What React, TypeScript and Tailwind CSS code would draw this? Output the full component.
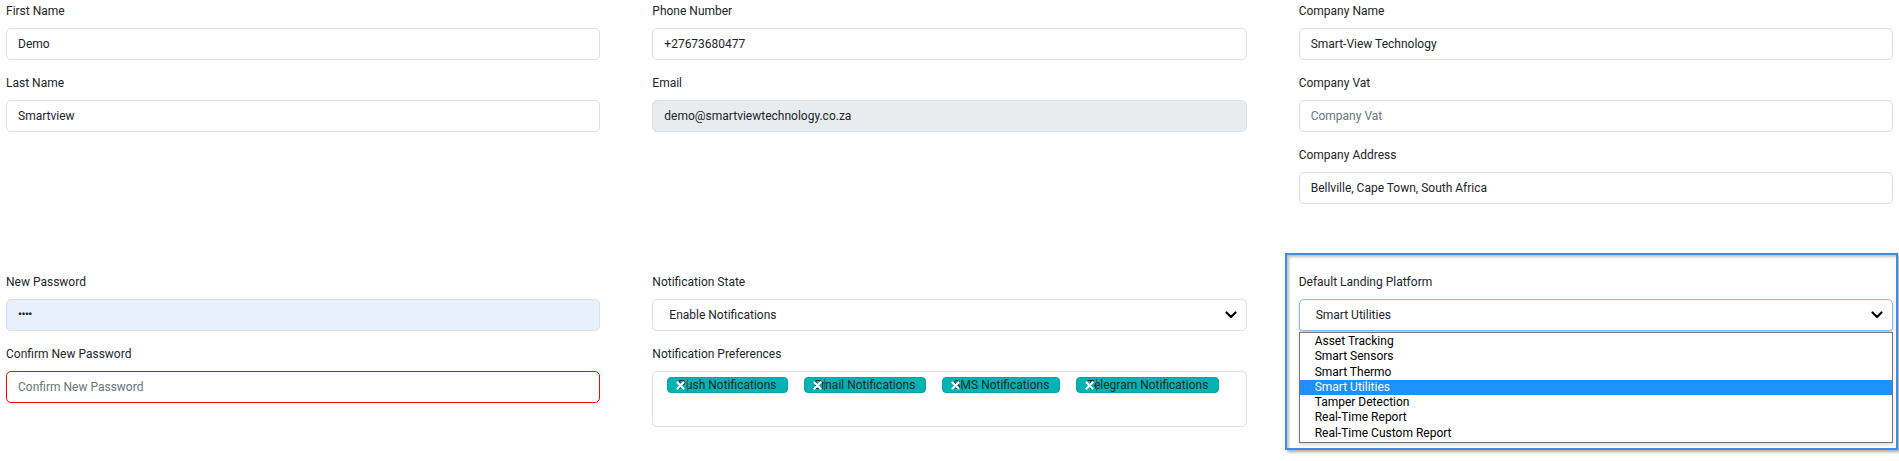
import React from "react";

const font = { fontFamily: "Roboto, 'Liberation Sans', sans-serif" };

function Label({ children }: { children: React.ReactNode }) {
  return <div className="h-[22px] leading-[22px] text-[12px] text-[#212529] mb-[6px]">{children}</div>;
}

function Field({
  label,
  value,
  placeholder,
  variant,
}: {
  label: string;
  value?: string;
  placeholder?: string;
  variant?: "disabled" | "autofill" | "error";
}) {
  const base = "h-[32px] rounded-[5px] border px-[11px] flex items-center text-[12px]";
  let cls = "bg-white border-[#dcdfe3]";
  if (variant === "disabled") cls = "bg-[#e9ecef] border-[#dcdfe3]";
  if (variant === "autofill") cls = "bg-[#e8f0fe] border-[#dcdfe3]";
  if (variant === "error") cls = "bg-white border-[#ff0000]";
  return (
    <div className="mb-[12px]">
      <Label>{label}</Label>
      <div className={`${base} ${cls}`}>
        {value ? (
          <span className="text-[#212529]">{value}</span>
        ) : (
          <span className="text-[#6c757d]">{placeholder}</span>
        )}
      </div>
    </div>
  );
}

function Chevron() {
  return (
    <svg width="12" height="8" viewBox="0 0 12 8" className="shrink-0">
      <path d="M1.5 1.5 L6 6 L10.5 1.5" fill="none" stroke="#000" strokeWidth="2.2" strokeLinecap="round" strokeLinejoin="round" />
    </svg>
  );
}

function Chip({ text }: { text: string }) {
  return (
    <div className="relative h-[16px] rounded-[4px] bg-[#00b2b2] border border-[#0aa3a3] pl-[10px] pr-[10px] flex items-center text-[12px] leading-none text-[#1f2a2a]">
      <span>{text}</span>
      <svg className="absolute left-[8px] top-[3px]" width="9" height="9" viewBox="0 0 9 9">
        <path d="M1.5 1.5 L7.5 7.5 M7.5 1.5 L1.5 7.5" stroke="#fff" strokeWidth="2.2" strokeLinecap="round" />
      </svg>
      <span className="absolute left-[19px] top-[1px] h-[12px] w-px bg-[#4a5a5a]" />
    </div>
  );
}

const options = [
  "Asset Tracking",
  "Smart Sensors",
  "Smart Thermo",
  "Smart Utilities",
  "Tamper Detection",
  "Real-Time Report",
  "Real-Time Custom Report",
];

export default function App() {
  return (
    <div className="w-[1899px] h-[461px] bg-white px-[6px] overflow-hidden" style={font}>
      <div className="grid grid-cols-3 gap-x-[52px]">
        <div>
          <Field label="First Name" value="Demo" />
          <Field label="Last Name" value="Smartview" />
        </div>
        <div>
          <Field label="Phone Number" value="+27673680477" />
          <Field label="Email" value="demo@smartviewtechnology.co.za" variant="disabled" />
        </div>
        <div>
          <Field label="Company Name" value="Smart-View Technology" />
          <Field label="Company Vat" placeholder="Company Vat" />
          <Field label="Company Address" value="Bellville, Cape Town, South Africa" />
        </div>
      </div>

      <div className="grid grid-cols-3 gap-x-[52px] mt-[55px]">
        <div>
          <div className="mb-[12px]">
            <Label>New Password</Label>
            <div className="h-[32px] rounded-[5px] border border-[#dcdfe3] bg-[#e8f0fe] px-[11px] flex items-center">
              <span className="text-[11px] font-bold tracking-[-0.5px] text-[#212529]">••••</span>
            </div>
          </div>
          <Field label="Confirm New Password" placeholder="Confirm New Password" variant="error" />
        </div>
        <div>
          <div className="mb-[12px]">
            <Label>Notification State</Label>
            <div className="h-[32px] rounded-[5px] border border-[#dcdfe3] bg-white pl-[16px] pr-[9px] flex items-center justify-between text-[12px] text-[#212529]">
              <span>Enable Notifications</span>
              <Chevron />
            </div>
          </div>
          <div>
            <Label>Notification Preferences</Label>
            <div className="h-[56px] rounded-[5px] border border-[#dcdfe3] bg-white pt-[5px] pl-[14px] flex items-start gap-x-[16px]">
              <Chip text="Push Notifications" />
              <Chip text="Email Notifications" />
              <Chip text="SMS Notifications" />
              <Chip text="Telegram Notifications" />
            </div>
          </div>
        </div>
        <div className="relative">
          <Label>Default Landing Platform</Label>
          <div className="h-[32px] rounded-t-[5px] rounded-b-[3px] border border-[#8ab4f8] bg-white pl-[16px] pr-[9px] flex items-center justify-between text-[12px] text-[#212529] shadow-[0_2px_3px_rgba(0,0,0,0.2)]">
            <span>Smart Utilities</span>
            <Chevron />
          </div>
          <div className="mt-[1px] border border-[#767676] bg-white py-[1px] shadow-[0_2px_3px_rgba(0,0,0,0.15)]">
            {options.map((o) => (
              <div
                key={o}
                className={`h-[15.3px] leading-[15.3px] pl-[15px] text-[12px] ${
                  o === "Smart Utilities" ? "bg-[#1e90ff] text-white" : "text-black"
                }`}
              >
                {o}
              </div>
            ))}
          </div>
          <div className="pointer-events-none absolute -left-[14px] -top-[18px] -right-[5px] -bottom-[7px] border-2 border-[#3d8eea] shadow-[2px_2px_3px_rgba(0,0,0,0.35),inset_2px_2px_3px_rgba(0,0,0,0.25)]" />
        </div>
      </div>
    </div>
  );
}
